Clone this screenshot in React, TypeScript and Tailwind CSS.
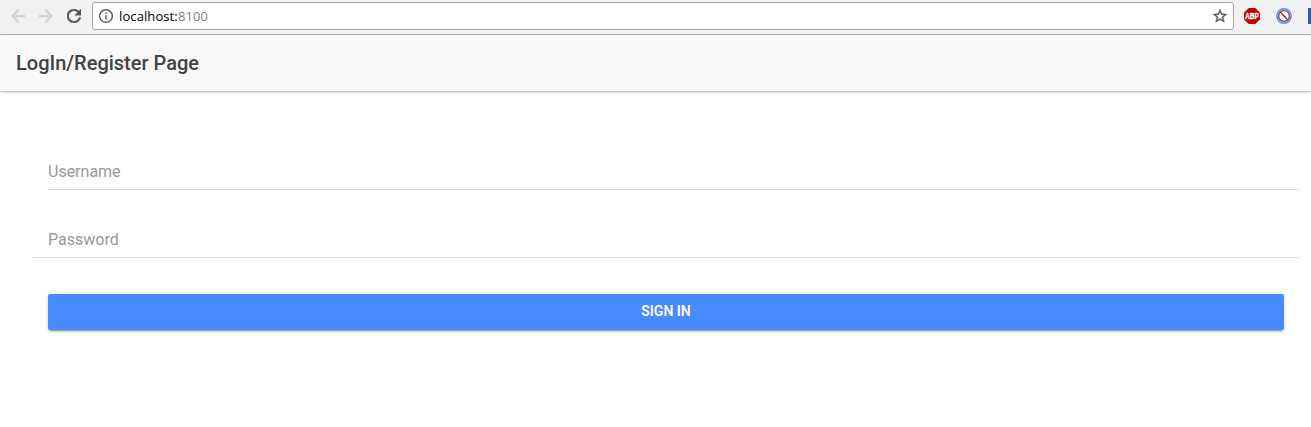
function BrowserBar() {
  return (
    <div className="flex h-[35px] shrink-0 items-start overflow-hidden border-b border-[#b3b3b3] bg-[#f1f1f1]">
      <div className="flex h-8 w-[92px] shrink-0 items-center gap-3.5 pl-[11px]">
        <svg className="size-3.5 shrink-0 fill-[#cfcfcf]" stroke="#cfcfcf" strokeWidth="0.4" viewBox="4 4 16 16">
          <path d="M20 11H7.83l5.59-5.59L12 4l-8 8 8 8 1.41-1.41L7.83 13H20v-2z" />
        </svg>
        <svg className="size-3.5 shrink-0 fill-[#cfcfcf]" stroke="#cfcfcf" strokeWidth="0.4" viewBox="4 4 16 16">
          <path d="m12 4-1.41 1.41L16.17 11H4v2h12.17l-5.58 5.59L12 20l8-8z" />
        </svg>
        <svg className="size-3.5 shrink-0 fill-[#555]" stroke="#555" strokeWidth="0.5" viewBox="4 4 16 16">
          <path d="M17.65 6.35A7.958 7.958 0 0 0 12 4c-4.42 0-7.99 3.58-7.99 8s3.57 8 7.99 8c3.73 0 6.84-2.55 7.73-6h-2.08A5.99 5.99 0 0 1 12 18c-3.31 0-6-2.69-6-6s2.69-6 6-6c1.66 0 3.14.69 4.22 1.78L13 11h7V4l-2.35 2.35z" />
        </svg>
      </div>
      <div className="mt-0.5 flex h-7 w-[1142px] shrink-0 items-center rounded-[3px] border border-[#a6a6a6] bg-white pl-1.5 pr-1.5">
        <svg className="size-3.5 shrink-0 fill-[#5a5a5a]" viewBox="2 2 20 20">
          <path d="M11 7h2v2h-2zm0 4h2v6h-2zm1-9C6.48 2 2 6.48 2 12s4.48 10 10 10 10-4.48 10-10S17.52 2 12 2zm0 18c-4.41 0-8-3.59-8-8s3.59-8 8-8 8 3.59 8 8-3.59 8-8 8z" />
        </svg>
        <div className="ml-1.5 flex-1 whitespace-nowrap font-['Open_Sans',sans-serif] text-[13px] leading-4 tracking-[0.1px] text-black">
          localhost:<span className="text-[#808080]">8100</span>
        </div>
        <svg className="size-3.5 shrink-0 fill-[#5a5a5a]" stroke="#5a5a5a" strokeWidth="0.6" viewBox="2 2 20 20">
          <path d="m22 9.24-7.19-.62L12 2 9.19 8.63 2 9.24l5.46 4.73L5.82 21 12 17.27 18.18 21l-1.63-7.03L22 9.24zM12 15.4l-3.76 2.27 1-4.28-3.32-2.88 4.38-.38L12 6.1l1.71 4.04 4.38.38-3.32 2.88 1 4.28L12 15.4z" />
        </svg>
      </div>
      <div className="flex h-8 shrink-0 items-center gap-4 pl-2.5">
        <svg className="size-4 shrink-0" viewBox="0 0 16 16">
          <path fill="#c70000" d="M4.7 0h6.6L16 4.7v6.6L11.3 16H4.7L0 11.3V4.7z" />
          <text transform="translate(8 11) scale(0.82 1)" textAnchor="middle" fill="#fff" stroke="#fff" strokeWidth="0.3" fontFamily="Liberation Sans, sans-serif" fontWeight="700" fontSize="8.2">ABP</text>
        </svg>
        <svg className="size-4 shrink-0" viewBox="0 0 16 16" fill="none">
          <circle cx="8" cy="8" r="7.1" fill="#fff" stroke="#4ba3ea" strokeWidth="1.8" />
          <circle cx="8" cy="8" r="5.4" stroke="#a3393c" strokeWidth="1.4" />
          <path d="m4.3 4.3 7.4 7.4" stroke="#a3393c" strokeWidth="1.3" />
          <path d="m7 6.4 2.6 2.6" stroke="#444" strokeWidth="0.8" />
        </svg>
        <div className="h-4 w-4 shrink-0 bg-[#3f51a5]" />
      </div>
    </div>
  );
}

export default function App() {
  return (
    <div className="flex h-[427px] w-[1311px] flex-col overflow-hidden bg-white font-[Roboto,sans-serif]">
      <BrowserBar />
      <header className="z-10 flex h-14 shrink-0 items-center bg-[#f8f8f8] px-4 shadow-[0_1px_1px_rgba(0,0,0,0.1),0_1px_4px_rgba(0,0,0,0.2)]">
        <h1 className="text-xl font-medium leading-6 text-[#424242]">LogIn/Register Page</h1>
      </header>
      <form className="flex flex-col pl-8 pr-[11px] pt-[55px]">
        <div className="ml-4 flex h-11 border-b border-[#dedede]">
          <input type="text" placeholder="Username" className="mt-4 h-5 w-full text-base leading-5 outline-none placeholder:text-[#999]" />
        </div>
        <div className="mt-6 flex h-11 border-b border-[#dedede] pl-4">
          <input type="password" placeholder="Password" className="mt-4 h-5 w-full text-base leading-5 outline-none placeholder:text-[#999]" />
        </div>
        <button type="button" className="ml-4 mr-4 mt-9 h-9 rounded-[2px] bg-[#488aff] pb-0.5 text-sm font-semibold leading-[14px] text-white shadow-[0_2px_2px_0_rgba(0,0,0,0.14),0_3px_1px_-2px_rgba(0,0,0,0.2),0_1px_5px_0_rgba(0,0,0,0.12)]">
          SIGN IN
        </button>
      </form>
    </div>
  );
}
